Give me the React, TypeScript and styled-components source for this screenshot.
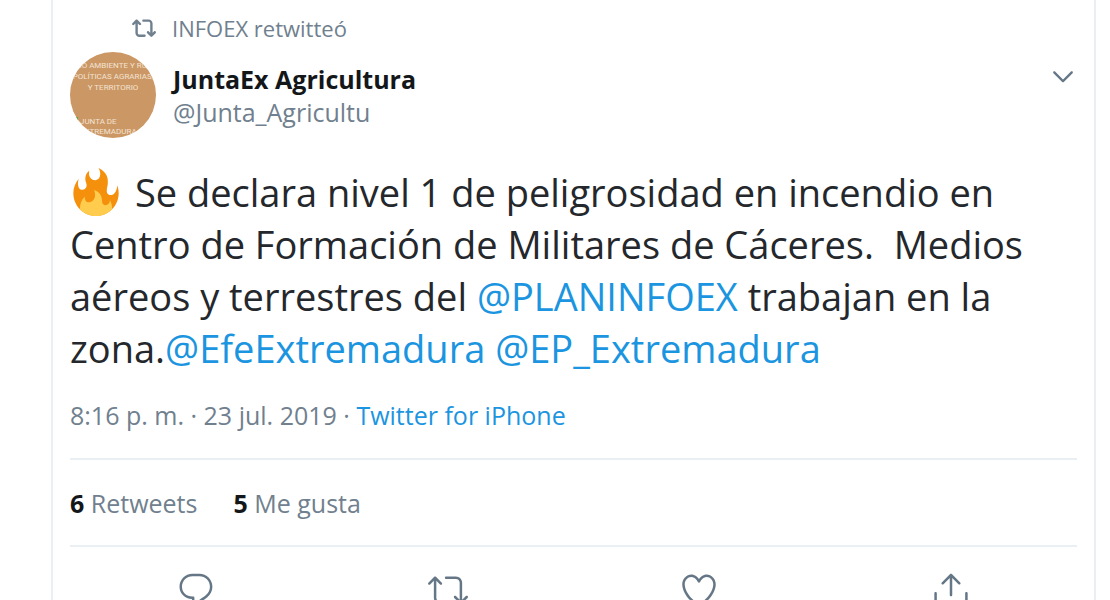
import React from "react";
import styled, { createGlobalStyle } from "styled-components";

const GlobalStyle = createGlobalStyle`
  * { box-sizing: border-box; }
  html { overflow: hidden; }
  body {
    margin: 0;
    background: #ffffff;
    color: #14171a;
    font-family: "Open Sans", "Noto Sans", sans-serif;
  }
`;

const Page = styled.main`
  height: 100vh;
  overflow: hidden;
  padding: 0 14px 0 51px;
`;

const Tweet = styled.article`
  min-height: 100vh;
  padding: 12px 17px 0;
  border: solid #e9eff3;
  border-width: 0 2px;
`;

const Icon = styled.svg<{ $size: number }>`
  display: block;
  flex: none;
  width: ${(p) => p.$size}px;
  height: ${(p) => p.$size}px;
  fill: currentColor;
`;

const Context = styled.div`
  display: flex;
  align-items: center;
  gap: 16px;
  height: 32px;
  padding-left: 62px;
  color: #70808e;
  font-size: 22px;
  line-height: 32px;
`;

const Header = styled.header`
  display: flex;
  gap: 17px;
  margin-top: 8px;
`;

const Avatar = styled.a`
  display: flex;
  flex-direction: column;
  flex: none;
  width: 86px;
  height: 86px;
  padding-top: 8px;
  overflow: hidden;
  border-radius: 50%;
  background: #cb9764;
  color: #f3e3d3;
  font: 8px/11px Roboto, "Liberation Sans", sans-serif;
  text-align: center;
  text-decoration: none;
  white-space: nowrap;
`;

const AvatarLine = styled.span`
  display: block;
`;

const AvatarSeal = styled.span`
  margin-top: 24px;
  padding-left: 2px;
  border-left: 8px solid transparent;
  border-image: linear-gradient(#5fa544 0 5px, transparent 5px) 1;
  border-width: 0 0 0 8px;
  line-height: 10px;
  text-align: left;
`;

const Names = styled.div`
  flex: 1;
  padding-top: 10px;
`;

const DisplayName = styled.a`
  display: block;
  color: #14171a;
  font-size: 25px;
  font-weight: 700;
  line-height: 34px;
  text-decoration: none;
`;

const Handle = styled.a`
  display: block;
  color: #70808e;
  font-size: 25px;
  line-height: 32px;
  text-decoration: none;
`;

const IconButton = styled.button`
  display: block;
  padding: 0;
  border: 0;
  background: none;
  color: #657786;
  cursor: pointer;
`;

const MenuButton = styled(IconButton)`
  align-self: flex-start;
  margin-top: 10px;
`;

const Body = styled.p`
  margin: 28px 0 0;
  color: #24282c;
  font-size: 38px;
  font-weight: 400;
  line-height: 52px;
  white-space: nowrap;
`;

const Flame = styled.svg`
  width: 48px;
  height: 48px;
  margin: 0 5px 0 2px;
  vertical-align: -9px;
`;

const Link = styled.a`
  color: #1b95e0;
  text-decoration: none;
`;

const Meta = styled.div`
  padding: 23px 0 25px;
  border-bottom: 2px solid #e9eff3;
  color: #70808e;
  font-size: 25px;
  line-height: 36px;
`;

const Stats = styled.div`
  display: flex;
  gap: 36px;
  padding: 25px 0 24px;
  border-bottom: 2px solid #e9eff3;
  font-size: 25px;
  line-height: 36px;
`;

const Stat = styled.a`
  color: #70808e;
  text-decoration: none;
`;

const Count = styled.strong`
  color: #14171a;
`;

const Actions = styled.div`
  display: grid;
  grid-template-columns: repeat(4, 1fr);
  justify-items: center;
  padding: 23px 0;
`;

const paths = {
  retweeted:
    "M23.615 15.477c-.47-.47-1.23-.47-1.697 0l-1.326 1.326V7.4c0-2.178-1.772-3.95-3.95-3.95h-5.2c-.663 0-1.2.538-1.2 1.2s.537 1.2 1.2 1.2h5.2c.854 0 1.55.695 1.55 1.55v9.403l-1.326-1.326c-.47-.47-1.23-.47-1.697 0s-.47 1.23 0 1.697l3.374 3.375c.234.233.542.35.85.35s.613-.116.848-.35l3.375-3.376c.467-.47.467-1.23-.002-1.697zM12.562 18.5h-5.2c-.854 0-1.55-.695-1.55-1.55V7.547l1.326 1.326c.234.235.542.352.848.352s.614-.117.85-.352c.468-.47.468-1.23 0-1.697L5.46 3.8c-.47-.468-1.23-.468-1.697 0L.388 7.177c-.47.47-.47 1.23 0 1.697s1.23.47 1.697 0L3.41 7.547v9.403c0 2.178 1.773 3.95 3.95 3.95h5.2c.664 0 1.2-.538 1.2-1.2s-.535-1.2-1.198-1.2z",
  caret:
    "M20.207 8.147c-.39-.39-1.023-.39-1.414 0L12 14.94 5.207 8.147c-.39-.39-1.023-.39-1.414 0-.39.39-.39 1.023 0 1.414l7.5 7.5c.195.196.45.294.707.294s.512-.098.707-.293l7.5-7.498c.39-.39.39-1.022 0-1.413z",
  reply:
    "M14.046 2.242l-4.148-.01h-.002c-4.374 0-7.8 3.427-7.8 7.802 0 4.098 3.186 7.206 7.465 7.37v3.828c0 .108.044.286.12.403.142.225.384.347.632.347.138 0 .277-.038.402-.118.264-.168 6.473-4.14 8.088-5.506 1.902-1.61 3.04-3.97 3.043-6.312v-.017c-.006-4.367-3.43-7.787-7.8-7.788zm3.787 12.972c-1.134.96-4.862 3.405-6.772 4.643V16.67c0-.414-.335-.75-.75-.75h-.396c-3.66 0-6.318-2.476-6.318-5.886 0-3.534 2.768-6.302 6.3-6.302l4.147.01h.002c3.532 0 6.3 2.766 6.302 6.296-.003 1.91-.942 3.844-2.514 5.176z",
  retweet:
    "M23.77 15.67c-.292-.293-.767-.293-1.06 0l-2.22 2.22V7.65c0-2.068-1.683-3.75-3.75-3.75h-5.85c-.414 0-.75.336-.75.75s.336.75.75.75h5.85c1.24 0 2.25 1.01 2.25 2.25v10.24l-2.22-2.22c-.293-.293-.768-.293-1.06 0s-.294.768 0 1.06l3.5 3.5c.145.147.337.22.53.22s.383-.072.53-.22l3.5-3.5c.294-.292.294-.767 0-1.06zm-10.66 3.28H7.26c-1.24 0-2.25-1.01-2.25-2.25V6.46l2.22 2.22c.148.147.34.22.532.22s.384-.073.53-.22c.293-.293.293-.768 0-1.06l-3.5-3.5c-.293-.294-.768-.294-1.06 0l-3.5 3.5c-.294.292-.294.767 0 1.06s.767.293 1.06 0l2.22-2.22V16.7c0 2.068 1.683 3.75 3.75 3.75h5.85c.414 0 .75-.336.75-.75s-.337-.75-.75-.75z",
  like:
    "M12 21.638h-.014C9.403 21.59 1.95 14.856 1.95 8.478c0-3.064 2.525-5.754 5.403-5.754 2.29 0 3.83 1.58 4.646 2.73.814-1.148 2.354-2.73 4.645-2.73 2.88 0 5.404 2.69 5.404 5.755 0 6.376-7.454 13.11-10.037 13.157H12zM7.354 4.225c-2.08 0-3.903 1.988-3.903 4.255 0 5.74 7.034 11.596 8.55 11.658 1.518-.062 8.55-5.917 8.55-11.658 0-2.267-1.823-4.255-3.903-4.255-2.528 0-3.94 2.936-3.952 2.965-.23.562-1.156.562-1.387 0-.014-.03-1.425-2.965-3.954-2.965z",
  share:
    "M17.53 7.47l-5-5c-.293-.293-.768-.293-1.06 0l-5 5c-.294.293-.294.768 0 1.06s.767.294 1.06 0l3.72-3.72V15c0 .414.336.75.75.75s.75-.336.75-.75V4.81l3.72 3.72c.146.147.338.22.53.22s.384-.072.53-.22c.293-.293.293-.767 0-1.06zM19.708 21.944H4.292C3.028 21.944 2 20.916 2 19.652V14c0-.414.336-.75.75-.75s.75.336.75.75v5.652c0 .437.355.792.792.792h15.416c.437 0 .792-.355.792-.792V14c0-.414.336-.75.75-.75s.75.336.75.75v5.652c0 1.264-1.028 2.292-2.292 2.292z",
};

type IconName = keyof typeof paths;

function Glyph({ name, size }: { name: IconName; size: number }) {
  return (
    <Icon $size={size} viewBox="0 0 24 24" aria-hidden="true">
      <path d={paths[name]} />
    </Icon>
  );
}

const actions: { name: IconName; label: string }[] = [
  { name: "reply", label: "Responder" },
  { name: "retweet", label: "Retwittear" },
  { name: "like", label: "Me gusta" },
  { name: "share", label: "Compartir Tweet" },
];

export default function App() {
  return (
    <>
      <GlobalStyle />
      <Page>
        <Tweet>
          <Context>
            <Glyph name="retweeted" size={24} />
            <span>INFOEX retwitteó</span>
          </Context>
          <Header>
            <Avatar href="#perfil">
              <AvatarLine>DIO AMBIENTE Y RUR</AvatarLine>
              <AvatarLine>POLÍTICAS AGRARIAS,</AvatarLine>
              <AvatarLine>Y TERRITORIO</AvatarLine>
              <AvatarSeal>
                JUNTA DE
                <br />
                EXTREMADURA
              </AvatarSeal>
            </Avatar>
            <Names>
              <DisplayName href="#perfil">JuntaEx Agricultura</DisplayName>
              <Handle href="#perfil">@Junta_Agricultu</Handle>
            </Names>
            <MenuButton type="button" aria-label="Más opciones">
              <Glyph name="caret" size={28} />
            </MenuButton>
          </Header>
          <Body>
            <Flame viewBox="0 0 36 36" role="img" aria-label="Fuego">
              <path
                fill="#F4900C"
                d="M35 19c0-2.062-.367-4.039-1.04-5.868-.46 5.389-3.333 8.157-6.335 6.868-2.812-1.208-.917-5.917-.777-8.164.236-3.809-.012-8.169-6.931-11.794 2.875 5.5.333 8.917-2.333 9.125-2.958.231-5.667-2.542-4.667-7.042-3.238 2.386-3.332 6.402-2.333 9 1.042 2.708-.042 4.958-2.583 5.208-2.84.28-4.418-3.041-2.963-8.333C2.52 10.965 1 14.805 1 19c0 9.389 7.611 17 17 17s17-7.611 17-17z"
              />
              <path
                fill="#FFCC4D"
                d="M28.394 23.999c.148 3.084-2.561 4.293-4.019 3.709-2.106-.843-1.541-2.291-2.083-5.291s-2.625-5.083-5.708-6c2.25 6.333-1.247 8.667-3.08 9.084-1.872.426-3.753-.001-3.968-4.007C7.352 23.668 6 26.676 6 30c0 .368.023.73.055 1.09C9.125 34.124 13.342 36 18 36s8.875-1.876 11.945-4.91c.032-.36.055-.722.055-1.09 0-2.187-.584-4.236-1.606-6.001z"
              />
            </Flame>{" "}
            Se declara nivel 1 de peligrosidad en incendio en
            <br />
            Centro de Formación de Militares de Cáceres.&nbsp; Medios
            <br />
            aéreos y terrestres del <Link href="#planinfoex">@PLANINFOEX</Link> trabajan en la
            <br />
            zona.<Link href="#efe">@EfeExtremadura</Link> <Link href="#ep">@EP_Extremadura</Link>
          </Body>
          <Meta>
            8:16 p. m. · 23 jul. 2019 · <Link href="#fuente">Twitter for iPhone</Link>
          </Meta>
          <Stats>
            <Stat href="#retweets">
              <Count>6</Count> Retweets
            </Stat>
            <Stat href="#me-gusta">
              <Count>5</Count> Me gusta
            </Stat>
          </Stats>
          <Actions>
            {actions.map((a) => (
              <IconButton key={a.name} type="button" aria-label={a.label}>
                <Glyph name={a.name} size={40} />
              </IconButton>
            ))}
          </Actions>
        </Tweet>
      </Page>
    </>
  );
}
